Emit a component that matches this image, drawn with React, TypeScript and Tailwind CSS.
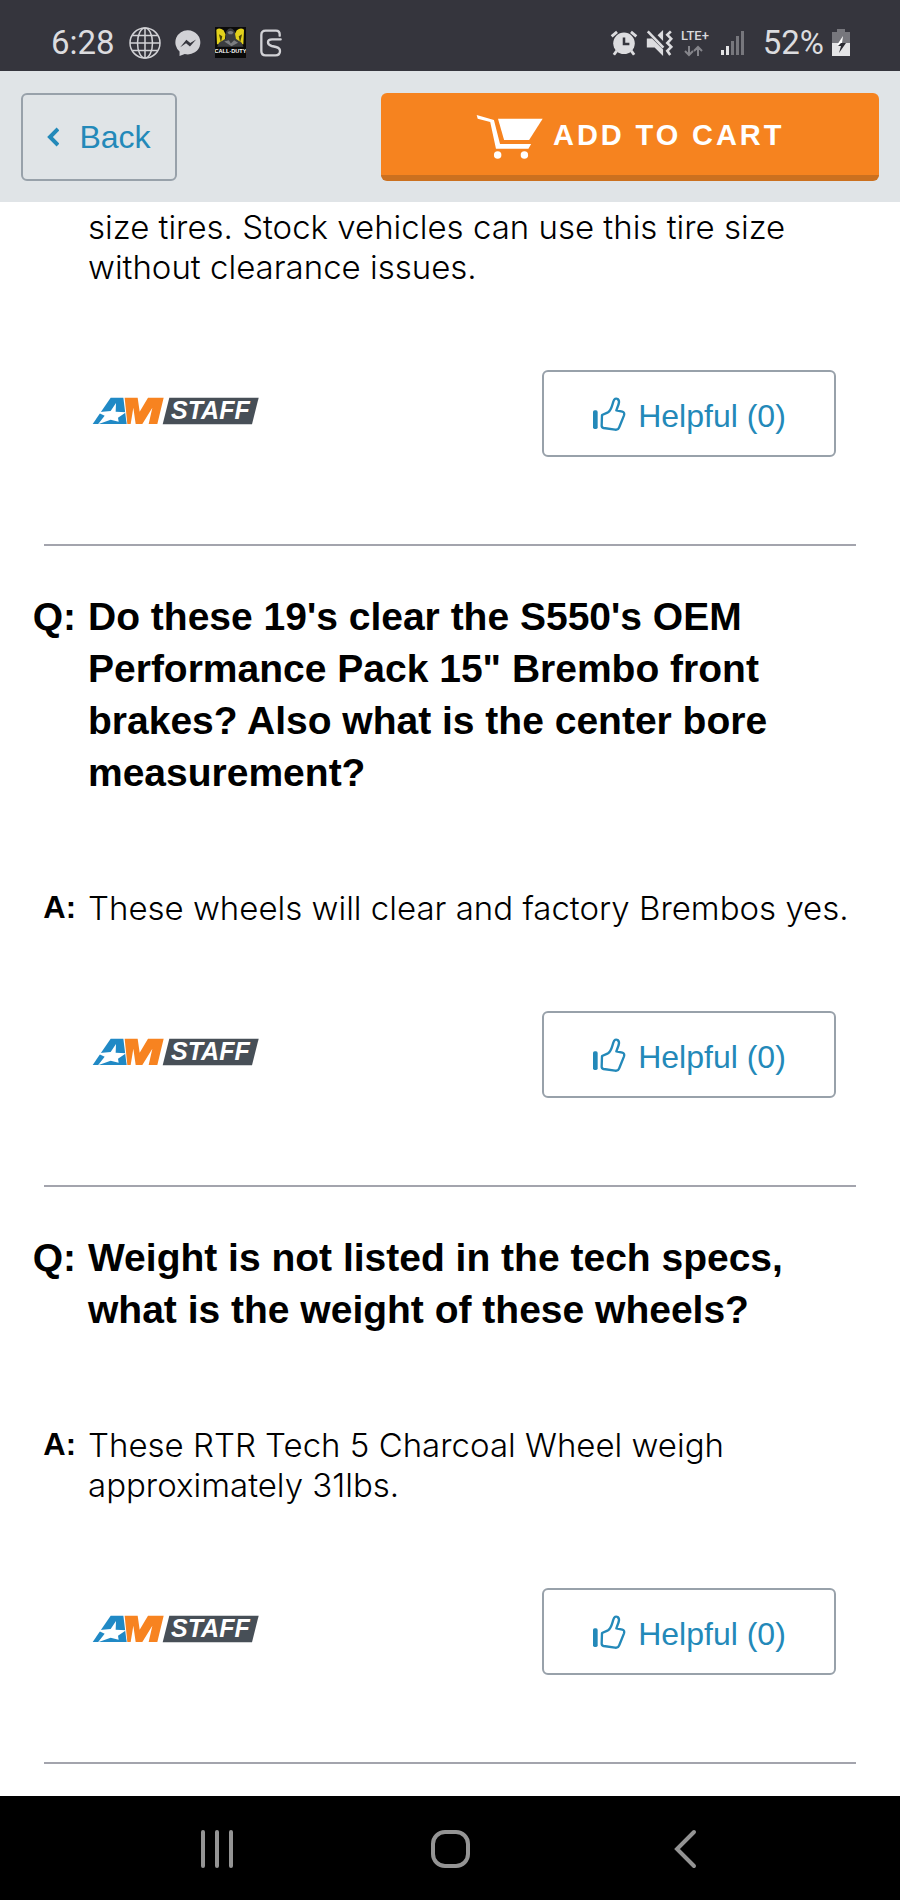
interface QA {
  question?: string;
  answer: string;
  helpful: number;
}

const ITEMS: QA[] = [
  {
    answer: 'size tires. Stock vehicles can use this tire size without clearance issues.',
    helpful: 0,
  },
  {
    question: `Do these 19's clear the S550's OEM Performance Pack 15" Brembo front brakes? Also what is the center bore measurement?`,
    answer: 'These wheels will clear and factory Brembos yes.',
    helpful: 0,
  },
  {
    question: 'Weight is not listed in the tech specs, what is the weight of these wheels?',
    answer: 'These RTR Tech 5 Charcoal Wheel weigh approximately 31lbs.',
    helpful: 0,
  },
];

function GlobeIcon() {
  return (
    <svg className="size-8" viewBox="0 0 32 32" fill="none" stroke="#d2d2d6" strokeWidth="1.5">
      <circle cx="16" cy="16" r="15" />
      <ellipse cx="16" cy="16" rx="7.5" ry="15" />
      <path d="M16 1v30M1 16h30M3.5 8.5h25M3.5 23.5h25" />
    </svg>
  );
}

function MessengerIcon() {
  return (
    <svg className="w-[26px] h-7" viewBox="518 88 80 82">
      <path d="M558 90a39 37 0 1 1-10 73l-16 6v-14A37 37 0 0 1 558 90z" fill="#d2d2d6" />
      <path d="M534 142l19-23 12 10 18-11-19 22-12-10z" fill="#35353d" />
    </svg>
  );
}

function GameIcon() {
  return (
    <svg className="size-[31px]" viewBox="0 0 94 94">
      <rect width="94" height="94" fill="#0b0b0b" />
      <path d="M4 8q10-8 22 2l6 12-4 30H6zM88 8q-10-8-22 2l-6 12 4 30h22z" fill="#e3d21c" />
      <path d="M12 22l10 6-4 20zM82 22l-10 6 4 20z" fill="#4b4508" />
      <path d="M34 14q12-20 26 0l3 22 18 12 6 14H6l6-14 20-12z" fill="#3b3d40" />
      <path d="M38 16q9-8 18 0l-4 6H42zM28 44l14-4 6 10 10-10 12 8-20 10z" fill="#7b7d80" />
      <rect y="60" width="94" height="34" fill="#0b0b0b" />
      <text x="47" y="78" textAnchor="middle" fontFamily="Liberation Sans" fontWeight="700" fontSize="17" fill="#fff">
        CALL·DUTY
      </text>
    </svg>
  );
}

function SwirlIcon() {
  return (
    <svg className="w-[22px] h-7" viewBox="778 86 66 84" fill="none" stroke="#d2d2d6" strokeWidth="7" strokeLinecap="round">
      <path d="M837 106v-4q0-11-11-11h-31q-13 0-13 13v48q0 13 13 13h29q14 0 14-13 0-9-12-12l-13-3q-11-3-11-11 0-9 12-9h26" />
    </svg>
  );
}

function AlarmIcon() {
  return (
    <svg className="w-7 h-[26px]" viewBox="86 86 86 82">
      <circle cx="129" cy="128" r="34" fill="#dcdcdf" />
      <path d="M129 110v20h17" fill="none" stroke="#35353d" strokeWidth="8" />
      <path d="M90 106l17-14M168 106l-17-14M106 152l-9 12M152 152l9 12" stroke="#dcdcdf" strokeWidth="9" />
    </svg>
  );
}

function MuteIcon() {
  return (
    <svg className="w-[27px] h-[26px]" viewBox="201 86 82 80">
      <path d="M203 112h16l34 34v20l-26-26h-24zM236 102l17-16v34z" fill="#dcdcdf" />
      <path d="M206 90l48 50" stroke="#dcdcdf" strokeWidth="8" />
      <path d="M277 90l-11 11 12 12-12 13 12 12-12 12 9 13" fill="none" stroke="#dcdcdf" strokeWidth="8" />
    </svg>
  );
}

function LteIcon() {
  return (
    <svg className="w-8 h-7" viewBox="0 0 32 28">
      <text x="0" y="11" fontFamily="Roboto" fontWeight="500" fontSize="13" fill="#d8d8dc">
        LTE+
      </text>
      <path d="M8 17v9M4 22l4 4 4-4M17 27v-9M13 22l4-4 4 4" fill="none" stroke="#85858b" strokeWidth="2" />
    </svg>
  );
}

function SignalIcon() {
  return (
    <svg className="w-6 h-[26px]" viewBox="0 0 24 26">
      <path d="M0 20h3v5H0zM5 16h3v9H5z" fill="#e4e4e6" />
      <path d="M10 11h3v14h-3zM15 6h3v19h-3zM20 1h3v24h-3z" fill="#77777d" />
    </svg>
  );
}

function BatteryIcon() {
  return (
    <svg className="w-[18px] h-7" viewBox="0 0 18 28">
      <path d="M5 0h8v3h5v12H0V3h5z" fill="#77777d" />
      <path d="M0 14h18v13H0z" fill="#e4e4e6" />
      <path d="M11 7l-6 9h5v-2z" fill="#fff" />
      <path d="M9 14h5L7 24l2-7H6z" fill="#2b2b32" />
    </svg>
  );
}

function CartIcon() {
  return (
    <svg className="w-[67px] h-[45px]" viewBox="315 100 198 133" fill="#fff">
      <path d="M317 103l51 15 18 71h92l-8 14h-96l-17-79-37-10z" />
      <path d="M380 114h132l-40 63h-74z" />
      <circle cx="379" cy="221" r="11" />
      <circle cx="458" cy="221" r="11" />
    </svg>
  );
}

function ThumbIcon() {
  return (
    <svg className="mb-1 w-[34px] h-9" viewBox="231 134 102 108">
      <rect x="234" y="177" width="14" height="56" rx="5" fill="#2389b9" />
      <path
        d="M261 191l18-8c10-6 12-20 16-32 3-9 8-11 13-8 5 4 5 9 3 15l-7 19 18 4c5 1 7 5 5 11l-14 35c-2 6-6 9-13 8l-34-5c-4-1-6-3-6-7z"
        fill="none"
        stroke="#2389b9"
        strokeWidth="7"
        strokeLinejoin="round"
      />
    </svg>
  );
}

function StaffLogo() {
  return (
    <svg className="mb-1.5 w-[167px] h-7" viewBox="66 140 501 84" role="img" aria-label="AM Staff">
      <path d="M68 221l54-79h38l10 79z" fill="#2089c5" />
      <path d="M138 158l-1 26 31 2-24 16 2 12-24-6-38 14 20-26-22-10 40-4z" fill="#fff" />
      <path d="M164 142h39l6 42 25-42h47l-19 79h-26l11-49-30 49h-20l-7-49-8 49h-10z" fill="#f78320" />
      <path d="M298 142h268l-20 80H278z" fill="#474f57" />
      <text x="303" y="207" fontFamily="Liberation Sans" fontWeight="700" fontStyle="italic" fontSize="75" fill="#fff">
        STAFF
      </text>
    </svg>
  );
}

function StatusBar() {
  return (
    <div className="flex h-[71px] items-center justify-between bg-[#35353d] pt-3.5 pr-[50px] pl-[51px] font-[Roboto,sans-serif] text-[33px] leading-8 text-[#dcdcdf]">
      <div className="flex items-center gap-3.5">
        <span>6:28</span>
        <GlobeIcon />
        <MessengerIcon />
        <GameIcon />
        <SwirlIcon />
      </div>
      <div className="flex items-center gap-2">
        <AlarmIcon />
        <MuteIcon />
        <LteIcon />
        <SignalIcon />
        <span className="pl-2.5">52%</span>
        <BatteryIcon />
      </div>
    </div>
  );
}

function Header() {
  return (
    <header className="flex items-center justify-between bg-[#e0e4e7] px-[21px] pt-[22px] pb-[21px]">
      <button className="flex h-[88px] w-[156px] items-center justify-center gap-5 rounded-md border-2 border-[#98a1aa] text-[32px] text-[#2389b9]">
        <svg className="h-5 w-3" viewBox="0 0 12 20" fill="none" stroke="currentColor" strokeWidth="4">
          <path d="M11 2L3 10l8 8" />
        </svg>
        Back
      </button>
      <button className="flex h-[88px] w-[58%] items-center justify-center gap-2.5 rounded-md border-b-6 border-[#cb701f] bg-[#f6831f] pt-1 text-[29px] font-bold tracking-widest text-white">
        <CartIcon />
        ADD TO CART
      </button>
    </header>
  );
}

function Item({ question, answer, helpful }: QA) {
  return (
    <article>
      {question && (
        <h2 className="flex gap-3 pt-[45px] pr-11 pl-5 text-[39px] leading-[52px] font-bold">
          <span className="w-14 shrink-0 text-right">Q:</span>
          <span>{question}</span>
        </h2>
      )}
      <div className={question ? 'flex gap-3 pt-[89px] pr-11 pl-5' : 'flex gap-3 pt-[5px] pr-11 pl-5'}>
        <span className="w-14 shrink-0 text-right text-[31px] leading-10 font-bold">{question && 'A:'}</span>
        <p className="font-[Inter,sans-serif] text-[33px] leading-10 font-light">{answer}</p>
      </div>
      <div className="flex items-center justify-between pt-[83px] pr-16 pb-[87px] pl-[92px]">
        <StaffLogo />
        <button className="flex h-[87px] w-[294px] items-center justify-center gap-3 rounded-md border-2 border-[#98a1aa] pt-1 text-[32px] text-[#2389b9]">
          <ThumbIcon />
          Helpful ({helpful})
        </button>
      </div>
      <hr className="mx-11 border-t-2 border-[#a3a4ad]" />
    </article>
  );
}

function NavBar() {
  return (
    <nav className="grid h-[105px] grid-cols-3 bg-black px-[100px] text-[#949494]">
      <button aria-label="Recent apps" className="flex items-center justify-center">
        <svg className="size-10" viewBox="0 0 40 40" stroke="currentColor" strokeWidth="4" strokeLinecap="round">
          <path d="M6 3v34M20 3v34M34 3v34" />
        </svg>
      </button>
      <button aria-label="Home" className="flex items-center justify-center">
        <svg className="size-10" viewBox="0 0 40 40" fill="none" stroke="currentColor" strokeWidth="4">
          <rect x="3" y="3" width="35" height="34" rx="12" />
        </svg>
      </button>
      <button aria-label="Back" className="flex items-center justify-center">
        <svg className="size-10" viewBox="0 0 40 40" fill="none" stroke="currentColor" strokeWidth="4" strokeLinecap="round">
          <path d="M31 3L14 20l17 17" />
        </svg>
      </button>
    </nav>
  );
}

export default function App() {
  return (
    <div className="bg-white font-['Liberation_Sans',Arial,sans-serif] text-black">
      <StatusBar />
      <Header />
      <main className="pb-8">
        {ITEMS.map((item) => (
          <Item key={item.answer} {...item} />
        ))}
      </main>
      <NavBar />
    </div>
  );
}
